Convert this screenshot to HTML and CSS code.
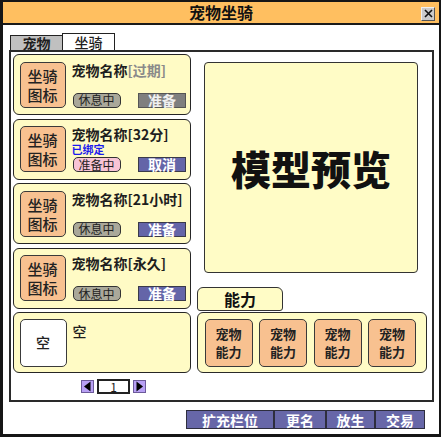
FILE: index.html
```html
<!DOCTYPE html>
<html lang="zh">
<head>
<meta charset="utf-8">
<link rel="stylesheet" href="styles.css">
</head>
<body>
<div class="win">
  <div class="titlebar">
    <span></span>
    <span class="title">宠物坐骑</span>
    <span class="close"><svg width="9" height="9" viewBox="0 0 9 9"><path d="M1 1L8 8M8 1L1 8" stroke="#111" stroke-width="1.6"/></svg></span>
  </div>
  <div class="tabs">
    <div class="tab off">宠物</div>
    <div class="tab on">坐骑</div>
  </div>
  <div class="panel">
    <div class="left">
      <div class="card">
        <div class="icon">坐骑<br>图标</div>
        <div class="info">
          <div class="name">宠物名称<span class="gray">[过期]</span></div>
          <div class="row"><span class="badge rest">休息中</span><span class="btn disabled">准备</span></div>
        </div>
      </div>
      <div class="card">
        <div class="icon">坐骑<br>图标</div>
        <div class="info">
          <div class="name">宠物名称[32分]</div>
          <div class="bound">已绑定</div>
          <div class="row"><span class="badge ready">准备中</span><span class="btn">取消</span></div>
        </div>
      </div>
      <div class="card">
        <div class="icon">坐骑<br>图标</div>
        <div class="info">
          <div class="name">宠物名称[21小时]</div>
          <div class="row"><span class="badge rest">休息中</span><span class="btn">准备</span></div>
        </div>
      </div>
      <div class="card">
        <div class="icon">坐骑<br>图标</div>
        <div class="info">
          <div class="name">宠物名称[永久]</div>
          <div class="row"><span class="badge rest">休息中</span><span class="btn">准备</span></div>
        </div>
      </div>
      <div class="card">
        <div class="icon empty">空</div>
        <div class="info">
          <div class="name empty-name">空</div>
        </div>
      </div>
      <div class="pager">
        <span class="arrow"><svg width="9" height="11" viewBox="0 0 9 11"><path d="M7.5 0.5V10.5L1 5.5Z" fill="#000"/></svg></span>
        <span class="page">1</span>
        <span class="arrow"><svg width="9" height="11" viewBox="0 0 9 11"><path d="M1.5 0.5V10.5L8 5.5Z" fill="#000"/></svg></span>
      </div>
    </div>
    <div class="right">
      <div class="preview">模型预览</div>
      <div class="abil-tab">能力</div>
      <div class="abil">
        <div class="skill">宠物<br>能力</div>
        <div class="skill">宠物<br>能力</div>
        <div class="skill">宠物<br>能力</div>
        <div class="skill">宠物<br>能力</div>
      </div>
    </div>
  </div>
  <div class="actions">
    <span class="act w88">扩充栏位</span>
    <span class="act w52">更名</span>
    <span class="act w49">放生</span>
    <span class="act w50">交易</span>
  </div>
</div>
</body>
</html>
```
FILE: styles.css
```css
html, body {
  margin: 0;
  padding: 0;
  background: #fff;
}
body {
  font-family: "Noto Sans CJK SC", "Noto Sans", sans-serif;
  color: #1e1e1e;
}
.win {
  box-sizing: border-box;
  width: 441px;
  height: 437px;
  border: 2px solid #161616;
  border-left-width: 3px;
  border-bottom-width: 3px;
  background: #fff;
}
.titlebar {
  height: 21px;
  background: #ffbf60;
  border-bottom: 2px solid #1a1a1a;
  display: grid;
  grid-template-columns: 1fr auto 1fr;
  align-items: center;
}
.title {
  font-size: 16px;
  font-weight: bold;
  line-height: 21px;
  color: #111;
}
.close {
  justify-self: end;
  margin-right: 4px;
  margin-top: 2px;
  width: 14px;
  height: 14px;
  box-sizing: border-box;
  background: #cacaca;
  border: 1px solid;
  border-color: #f0f0f0 #555 #555 #f0f0f0;
  display: flex;
  align-items: center;
  justify-content: center;
}
.tabs {
  margin-top: 8px;
  padding-left: 7px;
  height: 17px;
  display: flex;
  align-items: flex-end;
}
.tab {
  box-sizing: border-box;
  border: 1.5px solid #222;
  border-bottom: none;
  display: flex;
  align-items: center;
  justify-content: center;
  font-size: 14px;
}
.tab.off {
  width: 52px;
  height: 15px;
  background: #c0c0c0;
  font-weight: bold;
  border-right: none;
}
.tab.on {
  width: 53px;
  height: 17px;
  background: #fff;
  font-weight: 500;
}
.panel {
  box-sizing: border-box;
  margin-left: 6px;
  margin-right: 5px;
  height: 352px;
  border: 2px solid #2a2a2a;
  padding: 2px 0 0 2px;
  display: flex;
}
.left {
  width: 178px;
  display: flex;
  flex-direction: column;
  gap: 3.5px;
}
.card {
  box-sizing: border-box;
  height: 61px;
  border: 1.5px solid #262626;
  border-radius: 6px;
  background: #fffbc5;
  display: flex;
  padding: 6.5px 4px 5.5px 5.5px;
}
.icon {
  box-sizing: border-box;
  width: 46px;
  height: 46px;
  flex: none;
  border: 1.5px solid #3a3a3a;
  border-radius: 5px;
  background: #f8c190;
  display: flex;
  align-items: center;
  justify-content: center;
  text-align: center;
  font-size: 15px;
  line-height: 19px;
  font-weight: 500;
  color: #222;
}
.icon.empty {
  width: 47px;
  height: 48px;
  margin-top: -1px;
  background: #fff;
  font-size: 14px;
}
.info {
  flex: 1;
  margin-left: 6px;
  display: flex;
  flex-direction: column;
}
.name {
  font-size: 14px;
  font-weight: bold;
  line-height: 17px;
  white-space: nowrap;
  color: #1e1e1e;
}
.name.empty-name {
  margin-top: 3px;
  font-weight: 500;
}
.gray {
  color: #8a8a8a;
}
.bound {
  font-size: 11px;
  line-height: 13px;
  font-weight: bold;
  color: #1a1aee;
}
.row {
  margin-top: auto;
  padding-bottom: 1px;
  display: flex;
  justify-content: space-between;
  align-items: center;
}
.badge {
  box-sizing: border-box;
  width: 48px;
  height: 15px;
  margin-left: 1px;
  border: 1.5px solid #333;
  border-radius: 5px;
  font-size: 12px;
  line-height: 12px;
  display: flex;
  align-items: center;
  justify-content: center;
  color: #1e1e1e;
}
.badge.rest {
  background: #aaa89a;
}
.badge.ready {
  background: #f8c4d6;
}
.btn {
  box-sizing: border-box;
  width: 48px;
  height: 15px;
  border: 1px solid #3a3a4a;
  background: #6465a8;
  color: #fff;
  font-size: 14px;
  font-weight: bold;
  line-height: 13px;
  display: flex;
  align-items: center;
  justify-content: center;
}
.btn.disabled {
  background: #7f7f7f;
  border-color: #555;
  color: #f0f0f0;
}
.pager {
  margin-top: 2.5px;
  margin-left: 68px;
  height: 15px;
  display: flex;
  align-items: center;
  gap: 3px;
}
.arrow {
  box-sizing: border-box;
  width: 13px;
  height: 13px;
  background: #b8a0f4;
  border: 1px solid #6c5a9a;
  display: flex;
  align-items: center;
  justify-content: center;
}
.page {
  box-sizing: border-box;
  width: 33px;
  height: 15px;
  border: 2px solid #222;
  background: #fff;
  font-size: 12px;
  line-height: 11px;
  display: flex;
  align-items: center;
  justify-content: center;
}
.right {
  margin-left: 6px;
  width: 230px;
  display: flex;
  flex-direction: column;
}
.preview {
  box-sizing: border-box;
  margin-left: 7px;
  margin-top: 8px;
  width: 214px;
  height: 211px;
  border: 1.5px solid #333;
  border-radius: 4px;
  background: #fffcc6;
  display: flex;
  align-items: center;
  justify-content: center;
  font-size: 40px;
  font-weight: 900;
  color: #111;
}
.abil-tab {
  box-sizing: border-box;
  margin-top: 14px;
  width: 86px;
  height: 24px;
  border: 1.5px solid #333;
  border-radius: 6px 6px 3px 3px;
  background: #fffcc6;
  display: flex;
  align-items: center;
  justify-content: center;
  font-size: 16px;
  font-weight: bold;
  color: #111;
}
.abil {
  box-sizing: border-box;
  margin-top: 1px;
  height: 61px;
  border: 1.5px solid #2a2a2a;
  border-radius: 6px;
  background: #fffcc6;
  padding: 5.5px 0 0 6.5px;
  display: flex;
  gap: 6.5px;
}
.skill {
  box-sizing: border-box;
  width: 48px;
  height: 48px;
  border: 1.5px solid #3a3a3a;
  border-radius: 5px;
  background: #f8c190;
  display: flex;
  align-items: center;
  justify-content: center;
  text-align: center;
  font-size: 13px;
  line-height: 18px;
  font-weight: bold;
  color: #222;
}
.actions {
  margin-top: 8px;
  margin-right: 14px;
  display: flex;
  justify-content: flex-end;
}
.act {
  box-sizing: border-box;
  height: 19px;
  border: 1px solid #2e2e3e;
  background: #6767a8;
  color: #fff;
  font-size: 14px;
  font-weight: bold;
  display: flex;
  align-items: center;
  justify-content: center;
}
.act + .act {
  border-left-width: 1.5px;
}
.w88 { width: 88px; }
.w52 { width: 52px; }
.w49 { width: 49px; }
.w50 { width: 50px; }
```
